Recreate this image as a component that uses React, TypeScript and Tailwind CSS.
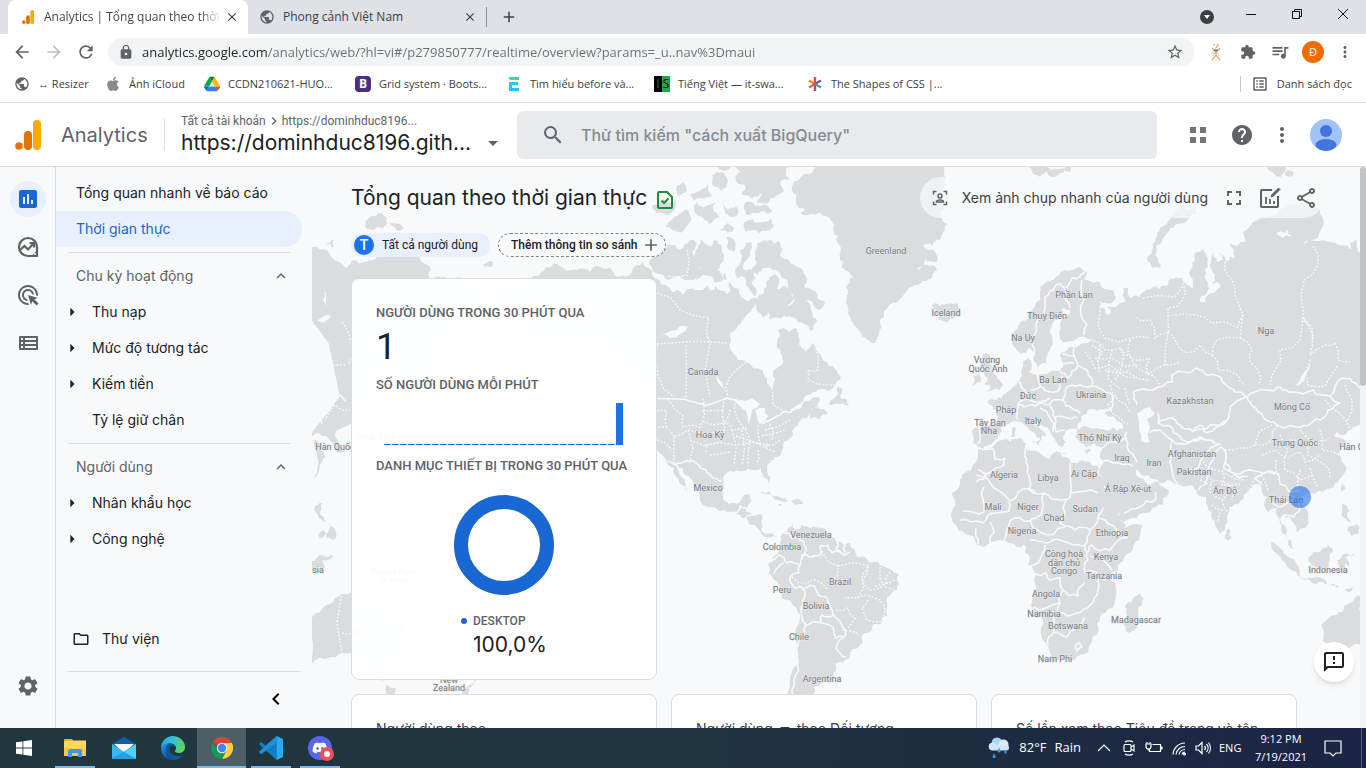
import React from "react";
import {
  MdAdd, MdAdsClick, MdArrowBack, MdArrowDropDown, MdArrowForward, MdArrowRight, MdClose, MdExpandLess,
  MdExtension, MdFullscreen, MdHelp, MdInsertChart, MdKeyboardArrowLeft, MdKeyboardArrowRight, MdListAlt, MdLock,
  MdMoreVert, MdOutlineFeedback, MdOutlineFolder, MdOutlineShare, MdPublic, MdQueueMusic, MdRefresh,
  MdSearch, MdSettings, MdStarBorder,
} from "react-icons/md";
import { FaApple, FaDiscord } from "react-icons/fa";

/* ---------- map geometry ---------- */

type Pt = [number, number];

const parse = (s: string): Pt[] =>
  s.trim().split(/\s+/).map((p) => p.split(",").map(Number) as Pt);

const noise = (a: number, b: number) => {
  const v = Math.sin(a * 12.9898 + b * 78.233) * 43758.5453;
  return v - Math.floor(v) - 0.5;
};

/* Adds small midpoint offsets so that a coarse outline reads as a coast. */
const roughen = (pts: Pt[], closed: boolean, amount: number, depth: number): Pt[] => {
  if (depth === 0) return pts;
  const out: Pt[] = [];
  pts.forEach((p, i) => {
    out.push(p);
    if (i === pts.length - 1 && !closed) return;
    const q = pts[(i + 1) % pts.length];
    const dx = q[0] - p[0];
    const dy = q[1] - p[1];
    const len = Math.hypot(dx, dy);
    if (len < 3) return;
    const k = noise(p[0] + q[0], p[1] + q[1]) * amount;
    out.push([(p[0] + q[0]) / 2 - dy * k, (p[1] + q[1]) / 2 + dx * k]);
  });
  return roughen(out, closed, amount, depth - 1);
};

const toPath = (s: string, closed: boolean, amount: number, depth: number) =>
  "M" + roughen(parse(s), closed, amount, depth).map((p) => p[0].toFixed(1) + "," + p[1].toFixed(1)).join("L") + (closed ? "Z" : "");

const land: string[] = [
  // Greenland, Iceland
  "815,160 812,173 800,178 793,184 792,190 797,196 796,203 805,209 800,213 811,214 818,213 826,216 832,221 833,229 838,236 841,248 840,260 842,268 849,272 853,276 850,282 846,287 848,293 846,302 848,313 851,320 856,327 862,337 870,341 875,343 879,333 880,320 884,311 888,307 896,303 903,296 908,289 915,285 926,281 933,274 937,270 927,265 919,270 917,268 925,259 937,262 936,254 925,248 923,245 933,246 940,240 943,232 948,224 942,218 945,205 941,195 945,185 944,175 947,160",
  "932,305 936,303 940,306 946,304 956,303 960,311 954,318 947,322 938,319 940,315 933,314 937,311",
  // Svalbard, Franz Josef, Novaya Zemlya
  "1030,160 1032,172 1040,177 1046,171 1052,177 1060,173 1070,172 1073,160",
  "1265,160 1268,170 1276,177 1284,173 1283,160",
  "1288,170 1294,172 1292,177 1286,176",
  "1196,206 1183,208 1172,215 1163,226 1157,236 1153,247 1147,260 1153,268 1162,270 1158,260 1157,250 1162,241 1167,233 1175,225 1188,219 1196,214",
  // Eurasia
  "1013,333 1018,326 1028,318 1035,306 1040,292 1044,284 1052,280 1060,274 1065,270 1072,270 1080,267 1087,272 1083,279 1087,280 1100,282 1112,290 1116,297 1113,302 1103,303 1093,298 1100,307 1107,315 1111,313 1108,306 1113,307 1120,303 1125,302 1123,288 1128,288 1130,298 1140,297 1146,290 1153,287 1160,289 1168,285 1170,279 1183,278 1187,285 1193,288 1189,273 1192,263 1195,253 1203,249 1206,255 1205,270 1208,283 1207,293 1200,302 1206,302 1211,293 1220,288 1217,282 1212,284 1215,275 1211,262 1212,250 1217,262 1223,260 1218,253 1226,262 1230,256 1237,270 1235,257 1230,243 1245,242 1243,232 1253,222 1273,215 1287,207 1303,203 1318,208 1323,218 1321,230 1311,240 1303,245 1315,241 1323,240 1335,243 1350,249 1362,253 1362,424 1352,428 1346,434 1337,432 1334,436 1343,439 1348,440 1343,446 1340,449 1345,465 1344,474 1338,482 1327,489 1317,492 1310,493 1306,495 1300,499 1303,506 1308,513 1309,523 1302,528 1297,533 1294,524 1289,517 1283,515 1282,524 1286,534 1291,540 1294,549 1288,545 1282,533 1280,523 1277,508 1268,512 1267,497 1260,484 1252,488 1247,493 1242,500 1235,504 1228,514 1225,529 1220,536 1216,527 1211,516 1208,507 1206,497 1199,496 1196,490 1192,485 1175,484 1160,483 1153,479 1143,476 1136,469 1131,464 1136,474 1145,482 1150,487 1156,481 1160,486 1169,493 1163,505 1150,512 1137,518 1123,522 1118,510 1112,500 1106,488 1099,474 1102,460 1103,447 1095,444 1087,447 1080,443 1076,438 1077,430 1088,427 1100,429 1112,428 1123,429 1121,422 1113,416 1104,414 1107,408 1098,411 1090,409 1082,416 1080,422 1078,429 1066,431 1063,436 1066,442 1062,448 1057,444 1053,437 1049,430 1042,425 1035,419 1031,420 1035,426 1043,431 1046,436 1043,435 1041,441 1036,436 1028,428 1021,422 1010,423 1001,427 1000,434 994,442 987,446 979,447 973,443 974,428 983,426 997,423 997,410 992,406 987,402 995,400 1002,398 1007,392 1012,388 1017,382 1022,376 1023,362 1029,358 1029,372 1040,374 1050,372 1060,371 1062,362 1060,356 1066,351 1077,347 1088,343 1090,339 1080,337 1070,341 1063,342 1059,334 1060,325 1068,315 1070,310 1063,308 1060,316 1053,323 1050,333 1053,343 1048,352 1046,363 1037,370 1033,358 1030,348 1020,354 1014,347",
  // British Isles, Mediterranean islands
  "982,357 986,353 990,355 988,360 992,366 997,376 1003,384 1000,390 987,392 990,385 985,384 988,378 984,374 986,368 980,366",
  "973,376 979,372 981,382 972,386",
  "1012,428 1015,427 1014,437 1011,436",
  "1032,441 1041,440 1039,446",
  "1058,452 1066,453 1060,455",
  "1084,451 1091,449 1087,454",
  // Africa, Madagascar
  "978,449 985,449 995,444 1010,442 1023,440 1026,448 1031,451 1045,457 1050,459 1053,453 1060,452 1066,457 1078,463 1088,461 1097,465 1100,474 1097,469 1104,488 1112,502 1120,520 1125,528 1143,525 1139,540 1130,553 1120,563 1112,572 1115,583 1115,601 1106,612 1100,617 1099,630 1093,636 1091,643 1080,655 1070,661 1053,663 1048,647 1041,634 1039,615 1032,602 1036,588 1036,575 1028,565 1026,553 1024,545 1016,547 1010,543 1000,540 988,544 977,545 965,534 955,524 951,516 953,508 952,493 960,480 966,472 973,465",
  "1140,593 1142,605 1138,618 1133,631 1127,632 1123,622 1126,612 1125,606 1132,602",
  // Asia islands
  "1226,530 1230,529 1232,538 1228,541 1225,536",
  "1345,486 1342,492 1341,487 1343,483",
  "1271,542 1280,548 1290,558 1300,570 1300,577 1291,570 1280,556",
  "1299,577 1312,578 1327,582 1326,585 1312,583",
  "1309,557 1320,552 1328,545 1333,552 1330,560 1326,570 1318,569 1311,565",
  "1337,560 1342,555 1355,554 1346,558 1350,567 1345,563 1343,574 1339,569",
  "1342,504 1347,506 1347,516 1351,521 1344,518",
  "1347,529 1356,524 1359,533 1352,536",
  "1330,585 1339,586 1338,588",
  "1345,590 1356,586 1348,592",
  "1362,596 1350,603 1342,612 1330,617 1321,625 1323,641 1327,655 1340,652 1362,645",
  "1350,242 1357,241 1358,249 1351,248",
  // west edge
  "306,246 313,247 327,250 340,262 347,268 353,260 366,262 377,257 403,257 420,258 430,267 430,278 445,277 460,277 500,285 540,310 520,330 480,330 440,360 420,400 395,380 380,370 370,400 351,424 342,428 335,436 345,452 336,451 328,438 318,433 306,440",
  "313,440 320,444 324,452 322,462 317,475 311,482",
  "316,505 322,503 320,514 326,522 319,519 315,512",
  "330,525 335,530 333,540 326,538",
  "323,530 326,533 318,540",
  "311,561 322,555 334,556 322,560 325,568 318,567 317,574 311,572",
  "306,619 316,613 325,606 334,601 341,594 351,592 358,598 366,600 372,608 382,593 390,612 404,630 410,645 400,665 385,680 372,678 366,665 351,653 338,655 325,659 306,665",
  "386,685 397,686 395,694 390,698 386,694",
  "473,672 479,678 474,684 468,694 463,698 458,697 470,685",
  "366,220 372,216 384,216 387,223 383,228 372,230 365,226",
  "390,223 401,225 404,229 396,230",
  "483,264 493,262 491,267 484,267",
  "326,243 334,240 333,248",
  // North America
  "500,300 525,280 537,276 545,268 553,264 566,271 577,270 590,272 600,267 615,276 630,275 640,265 643,262 652,271 660,281 668,287 673,292 680,291 684,294 690,289 700,290 707,285 712,291 716,286 727,294 729,283 723,278 726,272 731,284 737,288 741,298 748,302 757,298 763,294 767,286 770,277 775,274 779,282 777,289 785,286 790,290 793,298 787,306 782,310 779,318 770,319 768,312 763,318 760,313 755,304 752,309 745,317 738,325 730,337 729,345 733,354 738,360 750,364 753,368 763,370 767,378 768,384 773,388 775,380 773,374 776,369 782,358 779,349 777,342 778,330 785,329 791,331 797,329 799,338 801,347 806,352 813,343 817,350 822,358 829,366 838,374 840,380 833,388 822,389 813,392 804,398 800,404 790,412 800,409 806,401 813,398 820,399 815,407 809,410 813,408 823,409 828,413 820,419 812,419 810,413 800,421 795,427 793,435 785,441 782,450 775,457 768,464 767,471 770,480 768,484 763,476 761,468 748,468 744,471 730,471 723,478 722,490 723,499 729,504 739,503 743,496 750,495 748,505 744,513 752,514 761,514 762,524 764,533 772,533 778,537 774,536 766,537 758,529 749,524 740,515 730,512 719,511 708,507 700,500 699,493 694,486 685,475 677,464 674,463 679,473 685,483 688,491 680,484 675,475 668,465 665,458 657,450 650,430 645,400 625,370 600,350 570,340 540,350 520,330",
  "829,404 833,399 838,386 841,388 840,395 847,400 849,405 843,403 838,404",
  "760,492 770,491 780,497 789,501 781,501 770,494",
  "791,501 801,501 803,504 795,505",
  "778,505 782,504 781,506",
  // Arctic archipelago
  "757,243 764,240 774,244 779,241 785,249 780,254 787,259 795,265 803,270 807,282 804,287 812,290 817,298 824,301 820,310 813,305 806,300 812,312 817,320 812,331 804,324 796,318 790,316 778,318 782,308 792,304 793,295 788,284 783,278 776,270 765,268 758,274 752,270 757,262 755,255",
  "746,242 752,243 750,252 745,262 744,270 750,269 756,278 752,283 757,291 754,296 749,288 742,276 737,279 735,270 741,262 740,250",
  "700,240 709,246 715,240 722,248 724,258 717,270 723,280 714,282 704,275 696,280 700,268 693,258 698,248",
  "668,245 680,250 690,240 697,243 693,255 699,270 693,280 680,276 668,280 656,273 650,260 660,252",
  "744,222 753,219 763,222 771,218 773,228 766,231 752,230 745,231",
  "736,160 741,172 736,181 746,187 742,195 752,199 762,192 757,203 768,203 776,196 784,190 780,183 789,180 786,172 792,160",
  "745,203 755,206 766,205 772,210 768,214 755,213 746,215",
  "722,203 729,209 736,206 738,213 731,217 725,213",
  "720,230 728,223 734,227 732,232 724,230",
  "726,237 735,241 733,252 727,246",
  "697,202 706,206 716,202 714,212 720,217 709,224 700,216 694,209",
  "679,214 688,210 690,222 684,230 672,230 665,226 672,220",
  "652,206 663,199 670,203 676,200 675,209 664,214 655,216",
  "690,195 700,191 708,184 712,195 704,199 695,200",
  "712,175 722,172 728,182 721,191 713,186",
  "676,189 684,182 687,190 679,196",
  "727,160 730,168 722,170 718,164",
  "779,289 786,288 786,296 780,296",
  // South America
  "783,532 788,528 793,524 795,530 801,525 810,528 825,529 832,537 837,542 850,543 857,557 869,562 880,565 890,569 899,575 899,584 892,593 887,603 887,616 881,624 872,627 862,635 860,645 850,657 843,663 834,663 836,671 832,680 822,683 814,687 815,700 788,700 790,685 793,668 797,645 800,615 797,608 786,600 780,591 774,580 768,573 768,564 774,556 780,550 780,542",
];

const seas: string[] = [
  "1137,413 1143,409 1150,407 1155,413 1147,419 1150,428 1150,442 1141,441 1139,430",
  "1302,375 1309,368 1310,362 1306,373 1298,386 1295,386",
  "660,335 671,331 680,326 688,327 680,334 670,338",
  "1276,233 1285,233 1287,229 1288,234 1292,236 1286,235 1284,238",
  "735,402 744,401 752,398 760,404 752,410 748,424 746,411 740,406",
  "755,410 765,408 768,416 760,424 757,418",
  "324,291 326,298 327,306 323,300",
  "317,321 326,315 333,312 329,319",
  "716,376 722,382 725,390 718,383",
];

const borders: string[] = [
  // North America
  "640,398 728,398 738,401 745,402", "762,424 780,415 792,412", "667,461 682,463 697,464 706,470 713,478 722,481",
  "735,513 740,506 746,508", "746,518 752,515 758,514",
  // South America
  "783,532 792,538 803,541 806,548 803,555 801,563", "770,562 779,555 787,563 800,565", "774,574 784,563",
  "801,555 812,557 822,552 820,546 828,545 832,553 842,554 850,552", "837,542 836,550 842,553", "845,544 845,553",
  "801,563 799,573 790,578 795,588 803,588 810,585 817,592 826,597 830,606 833,615 842,626 846,635",
  "802,588 803,605 800,610", "803,605 806,625 813,622 822,623 822,615 833,615", "822,623 834,631 835,638 843,636",
  "806,625 799,640 798,660 794,680 792,700", "846,635 836,648 846,657",
  // Africa
  "982,450 993,449 995,459 1005,458 1003,466 989,473 976,482", "978,470 989,473", "1026,445 1025,452 1028,466 1029,490 1034,494",
  "976,475 1010,501 1030,489 1044,493", "984,487 984,512 963,511", "1044,493 1062,500 1070,497 1070,463", "1070,493 1098,493",
  "1010,501 1009,511 996,513 983,523 960,520", "1044,493 1041,515 1030,521 1010,521", "1066,500 1065,516 1060,523 1075,530 1090,530 1098,518 1104,508",
  "1030,521 1040,532 1065,527", "1010,521 1004,540", "990,522 990,543", "976,528 978,544", "1030,540 1046,543 1060,540 1075,545 1085,545 1090,530",
  "1098,518 1112,525 1118,534 1127,538 1110,550 1092,545 1088,552", "1045,545 1040,560 1030,566", "1085,545 1088,560 1085,572 1104,580 1115,578",
  "1090,556 1112,570", "1035,574 1046,573 1050,580 1060,578 1063,590 1078,596 1085,582", "1063,590 1060,603 1033,607",
  "1060,603 1058,613 1077,613 1090,605 1097,595 1098,578", "1054,612 1054,630 1048,645", "1054,632 1066,637 1077,627 1084,617", "1075,647 1079,643 1082,647 1077,651 1075,647",
  // Europe
  "1034,355 1035,334 1038,320 1045,305 1050,291 1060,284 1065,290", "1066,288 1072,278 1080,277 1085,270", "1066,290 1070,308",
  "1082,280 1084,300 1087,325 1083,335", "1018,381 1025,390 1024,400 1018,405", "1038,374 1040,386 1046,391 1060,388 1062,376", "1040,386 1031,390",
  "1060,372 1068,378 1078,366 1074,348", "1058,362 1074,363", "1062,354 1074,356", "1065,390 1080,385 1095,386 1110,393 1113,405 1100,413",
  "1065,390 1062,400 1072,408 1080,414", "1018,405 1024,407 1035,406 1050,404 1062,400", "1018,405 1018,420", "1025,398 1040,402 1050,398", "1040,408 1050,418 1053,432",
  "1050,405 1055,418 1065,417 1078,418", "1055,418 1056,432 1065,430", "998,424 1008,426", "979,428 978,444",
  "1078,366 1088,372 1092,385",
  // Asia
  "1133,392 1153,390 1173,382 1172,375 1185,372 1197,368 1205,374 1215,375 1225,384 1235,392 1247,397 1230,407 1227,420 1210,425 1196,430 1182,428 1172,418 1158,423 1158,413",
  "1133,392 1137,405", "1247,397 1267,390 1280,387 1293,392 1313,390 1330,396 1340,403 1328,410 1320,420 1310,424 1297,427 1273,422 1262,414 1250,402 1247,397",
  "1330,396 1342,378 1350,378 1362,388", "1158,423 1170,426 1180,436 1190,442 1200,437 1215,442", "1192,432 1200,425 1205,432 1215,428 1225,421", "1150,433 1160,430 1172,440",
  "1172,440 1170,462 1178,484", "1172,440 1190,442 1202,437 1220,444 1205,455 1198,468 1180,472", "1198,490 1208,476 1213,460 1221,447 1225,463 1240,474 1260,472 1275,474",
  "1225,463 1224,469 1240,478 1248,476", "1127,432 1127,447 1137,462", "1103,448 1114,442 1127,438", "1102,462 1113,463 1133,466", "1124,513 1140,507 1155,500 1156,492",
  "1262,485 1255,478 1264,473 1278,474 1280,484 1290,492 1300,490", "1270,500 1283,506 1296,500", "1283,515 1294,517 1300,510 1288,495",
  // west edge
  "312,385 318,379 326,378 334,392 346,402", "312,408 322,412 322,424",
];

const dotted: string[] = [
  "687,250 687,275 668,276", "657,293 680,310 709,318 710,344 710,397", "657,344 729,343", "686,345 686,397", "657,345 658,376 674,397",
  "746,362 729,378 728,397", "772,388 773,405 785,412", "815,345 818,370 808,370 808,380 817,384 838,385",
  "657,411 667,411 666,427 657,427", "668,399 683,416 683,427 700,427 703,399", "703,411 724,411", "666,427 674,437 688,430 725,430 724,400",
  "688,430 689,465", "674,437 674,463", "657,440 672,450", "706,452 706,445 735,445 770,445", "703,422 726,422 732,430 748,428", "730,410 726,421",
  "735,400 738,420 750,440", "732,430 734,465", "742,430 742,466", "750,440 748,466", "758,425 760,445", "762,436 785,430", "765,446 780,440", "710,455 730,452", "690,440 720,442", "770,424 772,440", "758,450 757,464", "736,436 775,452", "765,430 790,420",
  "820,553 828,562 838,566 838,575 832,580", "838,566 868,565 862,575 858,598 845,598", "792,577 806,584 815,580 828,590", "868,566 862,580 870,590 880,588 895,580", "880,567 880,580 895,590", "875,586 892,582", "858,598 870,596 880,600 885,610 880,622 867,620 862,608 868,600", "836,610 848,608 855,618 848,628", "842,630 860,634", "890,572 886,585",
  "1183,283 1183,300 1168,308 1169,333 1155,338 1150,320 1135,317", "1143,298 1175,297 1183,285", "1168,316 1195,315 1212,323 1238,328 1243,315 1235,295 1232,280 1225,270 1228,258",
  "1243,315 1240,338 1217,340 1212,355 1200,345 1185,353 1175,340 1168,333 1165,365", "1240,338 1252,350 1250,362 1260,375 1258,385", "1212,355 1218,370 1238,375 1245,385",
  "1313,246 1318,265 1304,280 1303,310 1300,340 1280,350 1275,370 1270,385", "1304,318 1313,335 1310,355 1325,345 1335,343 1338,360 1350,362", "1304,320 1312,328 1312,342", "1310,360 1308,385 1325,386 1338,365",
  "1100,307 1098,325 1105,338 1132,338 1150,338", "1090,340 1105,350 1120,348 1135,360 1150,358", "1085,352 1095,368 1110,365 1122,375 1135,378", "1100,345 1098,360", "1112,350 1108,378 1120,388", "1120,348 1122,365 1115,380", "1130,340 1132,360 1145,372 1160,385", "1150,358 1148,375 1165,365 1180,362", "1110,385 1118,400 1130,412", "1125,388 1130,405", "1095,358 1112,358 1140,365", "1105,370 1128,372 1150,380", "1092,345 1102,352 1100,372",
  "1115,395 1108,405 1120,418 1130,425", "1225,450 1240,448 1255,445 1258,435 1262,430 1272,425", "1255,445 1272,440 1278,425", "1262,455 1275,450 1288,458 1300,452 1305,462 1320,455", "1280,435 1288,450 1285,470 1300,480 1315,475", "1300,430 1310,440 1308,455 1325,465 1330,478", "1290,440 1312,445 1328,440", "1320,430 1322,450 1340,455", "1300,470 1298,488", "1276,460 1280,480", "1325,400 1338,412 1350,430", "1345,385 1352,400 1348,420", "1310,468 1318,488",
  "1200,455 1215,470 1228,475 1245,480", "1200,468 1212,480 1210,492 1222,500 1240,490", "1213,480 1230,485 1232,500", "1212,505 1222,510 1218,522", "1222,500 1228,512", "1222,470 1222,485 1240,484", "1200,480 1212,485", "1262,475 1268,490", "1255,478 1248,492",
  "312,345 317,355 324,365 345,365", "324,365 322,385 330,410 325,420", "342,322 352,346 348,365", "342,592 342,653", "342,633 352,633", "322,415 335,405 350,410",
];

const labels: [string, number, number][] = [
  ["Greenland", 886, 254], ["Iceland", 946, 316], ["Canada", 703, 375], ["Hoa Kỳ", 710, 438], ["Mexico", 708, 491],
  ["Venezuela", 811, 538], ["Colombia", 782, 550], ["Brazil", 840, 585], ["Peru", 782, 593], ["Bolivia", 816, 609],
  ["Chile", 799, 640], ["Argentina", 822, 682], ["Phần Lan", 1074, 298], ["Thụy Điển", 1047, 319], ["Na Uy", 1023, 341],
  ["Vương", 987, 363], ["Quốc Anh", 988, 372], ["Ba Lan", 1053, 383], ["Đức", 1028, 399], ["Ukraina", 1091, 398],
  ["Pháp", 1006, 413], ["Italy", 1033, 424], ["Tây Ban", 990, 426], ["Nha", 989, 434], ["Thổ Nhĩ Kỳ", 1100, 441],
  ["Nga", 1266, 334], ["Kazakhstan", 1190, 404], ["Mông Cổ", 1292, 410], ["Trung Quốc", 1295, 446], ["Hàn Quốc", 1359, 450],
  ["Afghanistan", 1192, 457], ["Pakistan", 1194, 475], ["Iraq", 1122, 461], ["Iran", 1154, 466], ["Ấn Độ", 1225, 494],
  ["Ả Rập Xê-út", 1128, 492], ["Algeria", 1004, 478], ["Libya", 1048, 481], ["Ai Cập", 1084, 477], ["Mali", 993, 510],
  ["Niger", 1028, 510], ["Chad", 1054, 521], ["Sudan", 1085, 512], ["Nigeria", 1022, 534], ["Ethiopia", 1112, 536],
  ["Cộng hoà", 1064, 557], ["dân chủ", 1064, 566], ["Congo", 1064, 574], ["Kenya", 1106, 560], ["Tanzania", 1104, 579],
  ["Angola", 1046, 597], ["Namibia", 1044, 617], ["Botswana", 1068, 629], ["Madagascar", 1136, 623], ["Nam Phi", 1055, 662],
  ["Thái Lan", 1286, 503], ["Indonesia", 1328, 573], ["Hàn Quốc", 335, 450], ["sia", 318, 573], ["Nhật Bản", 375, 440],
  ["Papua New", 394, 575], ["Guinea", 394, 583], ["Úc", 357, 635], ["New", 449, 683], ["Zealand", 449, 691],
];

const landPath = land.map((s) => toPath(s, true, 0.5, 2)).join("");
const seaPath = seas.map((s) => toPath(s, true, 0.4, 1)).join("");
const borderPath = borders.map((s) => toPath(s, false, 0.4, 2)).join("");
const dottedPath = dotted.map((s) => toPath(s, false, 0.35, 1)).join("");

function WorldMap() {
  return (
    <svg
      className="absolute inset-x-0 top-0 h-[527px] w-full"
      viewBox="312 167 1048 527"
      preserveAspectRatio="xMidYMin slice"
      role="img"
      aria-label="Bản đồ người dùng"
    >
      <path d={landPath} fill="#dadce0" />
      <path d={dottedPath} fill="none" stroke="#f8f9fb" strokeWidth="1.5" strokeDasharray="1.8 1.8" />
      <path d={borderPath} fill="none" stroke="#f8f9fb" strokeWidth="1.6" strokeLinejoin="round" />
      <path d={seaPath} fill="#f8f9fb" />
      <g
        className="font-['Roboto',sans-serif] text-[9px]"
        fill="#757b80"
        stroke="#e6e8ea"
        strokeWidth="1"
        paintOrder="stroke"
        textAnchor="middle"
      >
        {labels.map(([name, x, y]) => (
          <text key={name + x} x={x} y={y}>{name}</text>
        ))}
      </g>
      <circle cx="1300" cy="497" r="11" fill="#1a73e8" fillOpacity="0.6" />
    </svg>
  );
}

/* ---------- drawings ---------- */

const AnalyticsLogo = ({ className }: { className: string }) => (
  <svg className={className} viewBox="0 0 26 30" aria-hidden="true">
    <rect x="18" y="0" width="8" height="30" rx="4" fill="#f9ab00" />
    <rect x="9" y="11" width="8" height="19" rx="4" fill="#e37400" />
    <circle cx="4" cy="26" r="3.8" fill="#e37400" />
  </svg>
);

const DriveLogo = () => (
  <svg className="size-4" viewBox="0 0 87 78" aria-hidden="true">
    <path d="M6.600 66.850l3.850 6.650c.8 1.400 1.950 2.500 3.300 3.300l13.750-23.800H0c0 1.550.4 3.100 1.200 4.500z" fill="#0066da" />
    <path d="M43.650 25L29.900 1.200c-1.350.8-2.500 1.900-3.300 3.300l-25.400 44A9 9 0 000 53h27.500z" fill="#00ac47" />
    <path d="M73.550 76.800c1.350-.8 2.500-1.900 3.300-3.300l1.600-2.750L86.100 57.500c.8-1.400 1.200-2.950 1.200-4.500H59.800l5.850 11.500z" fill="#ea4335" />
    <path d="M43.650 25L57.400 1.200C56.050.4 54.500 0 52.900 0H34.400c-1.600 0-3.150.45-4.500 1.200z" fill="#00832d" />
    <path d="M59.800 53H27.500L13.750 76.800c1.350.8 2.900 1.200 4.500 1.200h50.800c1.600 0 3.150-.45 4.500-1.200z" fill="#2684fc" />
    <path d="M73.400 26.500L60.700 4.500c-.8-1.400-1.950-2.500-3.300-3.300L43.650 25 59.800 53h27.450c0-1.550-.4-3.100-1.200-4.500z" fill="#ffba00" />
  </svg>
);

const BlueE = () => (
  <svg className="size-4" viewBox="0 0 16 16" aria-hidden="true">
    <path d="M3 1h10v3H5a2 2 0 01-2-2z" fill="#1fe0b5" />
    <path d="M3 6h9v3H6v3h7v3H3z" fill="#22c7ea" />
    <path d="M3 6h9v3H3z" fill="#1fd3d8" />
  </svg>
);

const Asterisk = () => (
  <svg className="size-4" viewBox="0 0 16 16" fill="none" strokeWidth="2.400" aria-hidden="true">
    <path d="M8 8V1" stroke="#e5484d" />
    <path d="M8 8v7" stroke="#8a4fa0" />
    <path d="M8 8L2 4.500" stroke="#f5821f" />
    <path d="M8 8l6-3.500" stroke="#7b5a78" />
    <path d="M8 8l-6 3.500" stroke="#f0642c" />
    <path d="M8 8l6 3.500" stroke="#3aa6b9" />
    <circle cx="8" cy="8" r="1.500" fill="#e5484d" />
  </svg>
);

const Stickman = () => (
  <svg className="size-4" viewBox="0 0 16 16" fill="none" aria-hidden="true">
    <path d="M8 4l-4 5h4l4-4M8 6l3 6M8 6L5 12" stroke="#c9d0dc" strokeWidth="1" />
    <path d="M6 1.500a2 2 0 114 0c0 1-2 1-2 2.500M4 4l2 2h4l2-2M8 6v5M8 11l-4 5M8 11l4 5" stroke="#f09a4a" strokeWidth="1.200" />
    <path d="M6 6.500h4" stroke="#3d6fb5" strokeWidth="1.400" />
  </svg>
);

const ExploreIcon = () => (
  <svg className="size-6" viewBox="0 0 24 24" fill="none" stroke="#5f6368" strokeWidth="2.200" aria-hidden="true">
    <path d="M12 3a9 9 0 100 18h9v-9a9 9 0 00-9-9z" strokeLinejoin="round" />
    <path d="M4 15l4.500-4 3.500 3.500 5-5.500" />
    <path d="M13.500 8H18v4.500" />
    <path d="M15.500 21l5.500-5.500V21z" fill="#5f6368" stroke="none" />
    <circle cx="19" cy="19" r="1" fill="#f8f9fb" stroke="none" />
  </svg>
);

const TableIcon = () => (
  <svg className="size-5" viewBox="0 0 20 20" aria-hidden="true">
    <rect x="1" y="3" width="19" height="14" rx="1" fill="#5f6368" />
    <path d="M3 5h2v2H3zM7 5h11v2H7zM3 9h2v2H3zM7 9h11v2H7zM3 13h2v2H3zM7 13h11v2H7z" fill="#f8f9fb" />
  </svg>
);

const VerifiedDoc = () => (
  <svg className="mt-1 h-5 w-4" viewBox="0 0 16 20" fill="none" stroke="#1e8e3e" strokeWidth="2" aria-hidden="true">
    <path d="M1 3a1 1 0 011-1h8l5 5v10a1 1 0 01-1 1H2a1 1 0 01-1-1z" />
    <path d="M4.500 10.500l2.500 2.500 4.500-4.500" />
  </svg>
);

const SnapshotIcon = () => (
  <svg className="size-4" viewBox="0 0 16 16" fill="none" stroke="#5f6368" strokeWidth="1.500" aria-hidden="true">
    <path d="M1.500 4.500v-3h3M11.500 1.500h3v3M14.500 11.500v3h-3M4.500 14.500h-3v-3" />
    <circle cx="8" cy="6" r="2" />
    <path d="M4.500 12c0-2.700 7-2.700 7 0z" />
  </svg>
);

const EditChartIcon = () => (
  <svg className="size-6" viewBox="0 0 24 24" fill="none" stroke="#5f6368" strokeWidth="2" aria-hidden="true">
    <path d="M14 4H4a1 1 0 00-1 1v15a1 1 0 001 1h15a1 1 0 001-1V10" />
    <path d="M8 11v7M12 13v5M16 15v3" strokeWidth="1.800" />
    <path d="M13 11l1-2.500L20.500 2 22 3.500 15.500 10z" fill="#5f6368" strokeWidth="1" />
  </svg>
);

const Avatar = () => (
  <svg className="size-8" viewBox="0 0 32 32" aria-hidden="true">
    <clipPath id="avatar-clip"><circle cx="16" cy="16" r="16" /></clipPath>
    <g clipPath="url(#avatar-clip)">
      <rect width="32" height="32" fill="#a1c2fa" />
      <circle cx="16" cy="12" r="6" fill="#4374e0" />
      <ellipse cx="16" cy="26" rx="10.500" ry="6" fill="#4374e0" />
    </g>
  </svg>
);

const WindowsLogo = () => (
  <svg className="size-4" viewBox="0 0 16 16" fill="#fff" aria-hidden="true">
    <path d="M0 2.300L6.500 1.400v6.200H0zM7.300 1.300L16 0v7.600H7.300zM0 8.400h6.500v6.200L0 13.700zM7.300 8.400H16V16l-8.700-1.300z" />
  </svg>
);

const ExplorerIcon = () => (
  <svg className="size-6" viewBox="0 0 24 24" aria-hidden="true">
    <path d="M1 3h8l2 3H1z" fill="#e0a213" />
    <path d="M1 6l1-1.500h21V20H1z" fill="#ffd75e" />
    <path d="M1 12h22v8H1z" fill="#fccb43" />
    <path d="M5 21v-6a2 2 0 012-2h10a2 2 0 012 2v6h-4v-4H9v4z" fill="#3b9be8" />
  </svg>
);

const MailIcon = () => (
  <svg className="size-6" viewBox="0 0 24 24" aria-hidden="true">
    <path d="M0 8l12-7 12 7v15H0z" fill="#0f5fae" />
    <path d="M2 8h20l-10 9z" fill="#fff" />
    <path d="M0 8l12 8L0 23z" fill="#35b8f1" />
    <path d="M24 8L0 23h24z" fill="#1fa0e6" />
    <path d="M24 8L12 16l12 7z" fill="#50d0fa" />
  </svg>
);

const EdgeIcon = () => (
  <svg className="size-6" viewBox="0 0 24 24" aria-hidden="true">
    <defs>
      <linearGradient id="edge-top" x1="0" x2="1" y1="0.300" y2="0.500">
        <stop offset="0" stopColor="#2fa8e6" /><stop offset="0.500" stopColor="#35c1d6" /><stop offset="1" stopColor="#62d84a" />
      </linearGradient>
      <linearGradient id="edge-mid" x1="0" x2="0.600" y1="0" y2="1">
        <stop offset="0" stopColor="#1b9de2" /><stop offset="1" stopColor="#114a8b" />
      </linearGradient>
    </defs>
    <path d="M0 12C0 5 5.500 0 12 0s12 5 12 11c0 4-3 6-6 6-2.500 0-4-1-4-2 0-.8 1-1.200 1-3 0-2.500-2.500-4.500-6-4.500C4 7.500 1 10 0 12z" fill="url(#edge-top)" />
    <path d="M0 12c1-3.500 4.500-5 8-4.500C6 9 5 11.500 5 14c0 5 3 9 8 10C6 24.500 0 19.500 0 12z" fill="url(#edge-mid)" />
    <path d="M8.500 12.500C8.500 18 13 20 17 20c2 0 4-.7 5.300-1.500C20 22 16.500 24 13 24c-5-1-8-5-8-10 0-2.500 1-5 3-6.500 3 0 5.500 1 6.500 3-3-1-6 0-6 2z" fill="#125699" />
  </svg>
);

const ChromeIcon = () => (
  <svg className="size-6" viewBox="0 0 24 24" aria-hidden="true">
    <path d="M12 12L2.500 6.500A11 11 0 0121.500 6.500z" fill="#db4437" />
    <path d="M12 12L21.500 6.500A11 11 0 0112 23l4.500-8.500z" fill="#ffcd40" />
    <path d="M12 12l4.300 2.500L12 23A11 11 0 012.500 6.500l5.200 8z" fill="#0f9d58" />
    <path d="M12 7h9.800A11 11 0 0121.500 17L12 12z" fill="#ffcd40" />
    <path d="M2.500 6.500A11 11 0 0121.800 7H12z" fill="#db4437" />
    <circle cx="12" cy="12" r="5.200" fill="#f1f1f1" />
    <circle cx="12" cy="12" r="4.200" fill="#4285f4" />
  </svg>
);

const VsCodeIcon = () => (
  <svg className="size-6" viewBox="0 0 24 24" aria-hidden="true">
    <path d="M17.500 0L7 9.700 2.500 6.200.5 7.200v1.600L17.500 24v-6.800z" fill="#0f7cc4" />
    <path d="M17.500 6.800L2.500 18 .5 16.900v-1.600L17.500 0z" fill="#1a8fdb" />
    <path d="M17.500 0L24 3v18l-6.500 3z" fill="#2ba9f3" />
  </svg>
);

const DiscordIcon = () => (
  <span className="relative flex size-6 items-center justify-center rounded-full bg-[#5865f2] text-white">
    <FaDiscord className="size-4" />
    <svg className="absolute -right-0.5 -bottom-px size-3.5" viewBox="0 0 14 14" aria-hidden="true">
      <circle cx="7" cy="7" r="7" fill="#f04f54" /><circle cx="7" cy="7" r="3" fill="#fff" />
    </svg>
  </span>
);

const WeatherIcon = () => (
  <svg className="size-6" viewBox="0 0 24 24" aria-hidden="true">
    <circle cx="10" cy="7" r="5.500" fill="#a9d8f7" />
    <circle cx="5.500" cy="10.500" r="3.800" fill="#d6ecfa" />
    <circle cx="16.500" cy="8.500" r="5" fill="#d9ecf8" />
    <rect x="3" y="9" width="19" height="5.500" rx="2.700" fill="#cfe6f7" />
    <path d="M12 11.500l1.700 3.500a1.600 1.600 0 11-3.200 0zM17.500 14.500h2v3h-2zM7 17.500l1.700 3a1.600 1.600 0 11-3.200 0z" fill="#3b9be8" />
  </svg>
);

/* ---------- browser chrome ---------- */

const iconButton = "flex shrink-0 items-center justify-center";

function TabStrip() {
  return (
    <div className="flex h-[34px] bg-[#dee1e6] pl-2">
      <div className="flex w-60 items-center rounded-t-lg bg-white pr-2 pl-[13px]">
        <AnalyticsLogo className="h-3.5 w-3.5" />
        <button className="ml-[9px] flex-1 overflow-hidden bg-[linear-gradient(90deg,#3c4043_155px,transparent_178px)] bg-clip-text text-left text-xs whitespace-nowrap text-transparent">
          Analytics | Tổng quan theo thời gian thực
        </button>
        <button className={iconButton + " ml-1 size-4"} aria-label="Đóng thẻ Analytics"><MdClose className="size-3.5 text-[#3c4043]" /></button>
      </div>
      <div className="flex w-[238px] items-center pr-2 pl-[11px]">
        <MdPublic className="size-4 text-[#5f6368]" />
        <button className="ml-2 flex-1 text-left text-xs whitespace-nowrap text-[#3c4043]">Phong cảnh Việt Nam</button>
        <button className={iconButton + " size-4"} aria-label="Đóng thẻ Phong cảnh"><MdClose className="size-3.5 text-[#3c4043]" /></button>
      </div>
      <div className="my-[7px] w-px bg-[#8c9094]" />
      <button className={iconButton + " ml-[13px] w-[18px]"} aria-label="Thẻ mới"><MdAdd className="size-[18px] text-[#3c4043]" /></button>
      <div className="flex-1" />
      <button className={iconButton + " w-[42px]"} aria-label="Tìm thẻ">
        <svg className="size-3.5" viewBox="0 0 14 14"><circle cx="7" cy="7" r="7" fill="#3c4043" /><path d="M4 5h6l-3 4z" fill="#fff" /></svg>
      </button>
      <button className={iconButton + " h-7 w-[46px]"} aria-label="Thu nhỏ"><svg className="size-2.5" viewBox="0 0 10 10"><path d="M0 5.500h10" stroke="#111" /></svg></button>
      <button className={iconButton + " h-7 w-[46px]"} aria-label="Khôi phục">
        <svg className="size-2.5" viewBox="0 0 10 10" fill="none" stroke="#111"><path d="M.5 2.500h7v7h-7zM2.500 2.500v-2h7v7h-2" /></svg>
      </button>
      <button className={iconButton + " h-7 w-[46px]"} aria-label="Đóng"><svg className="size-2.5" viewBox="0 0 10 10"><path d="M0 0l10 10M10 0L0 10" stroke="#111" /></svg></button>
    </div>
  );
}

function Toolbar() {
  return (
    <div className="flex h-9 items-center px-3 text-[#5f6368]">
      <button className={iconButton + " w-5"} aria-label="Quay lại"><MdArrowBack className="size-5" /></button>
      <button className={iconButton + " ml-3 w-5 text-[#bcbec1]"} aria-label="Tiến"><MdArrowForward className="size-5" /></button>
      <button className={iconButton + " ml-3 w-5"} aria-label="Tải lại"><MdRefresh className="size-5" /></button>
      <div className="ml-3 flex h-7 flex-1 items-center rounded-full bg-[#f1f3f4] pr-2.5 pl-2.5">
        <label htmlFor="address"><MdLock className="size-4" title="Địa chỉ" /></label>
        <input
          id="address"
          className="ml-2 h-7 flex-1 bg-[linear-gradient(90deg,#202124_126px,#6a6e73_126px)] bg-clip-text text-[13px] text-transparent outline-none"
          defaultValue="analytics.google.com/analytics/web/?hl=vi#/p279850777/realtime/overview?params=_u..nav%3Dmaui"
        />
        <button className={iconButton} aria-label="Đánh dấu trang"><MdStarBorder className="size-[18px]" /></button>
      </div>
      <button className={iconButton + " ml-3.5 w-4"} aria-label="Tiện ích Stickman"><Stickman /></button>
      <button className={iconButton + " ml-4 w-4"} aria-label="Tiện ích"><MdExtension className="size-4" /></button>
      <button className={iconButton + " ml-3.5 w-5"} aria-label="Điều khiển nội dung"><MdQueueMusic className="size-5" /></button>
      <button className="ml-3 flex size-[22px] shrink-0 items-center justify-center rounded-full bg-[#ef6c00] text-[11px] text-white">Đ</button>
      <button className={iconButton + " ml-3 w-[18px]"} aria-label="Tuỳ chỉnh"><MdMoreVert className="size-[18px]" /></button>
    </div>
  );
}

const bookmarkClass = "flex shrink-0 items-center gap-2 whitespace-nowrap";

function Bookmarks() {
  return (
    <nav className="flex h-[33px] items-center border-b border-[#dadce0] pr-3.5 pb-1 pl-3.5 text-[11px] text-[#3c4043]" aria-label="Dấu trang">
      <a href="#resizer" className={bookmarkClass + " w-[91px]"}><MdPublic className="size-4 text-[#5f6368]" />↔ Resizer</a>
      <a href="#icloud" className={bookmarkClass + " w-[99px]"}><FaApple className="size-4 text-[#8a8a8a]" />Ảnh iCloud</a>
      <a href="#drive" className={bookmarkClass + " w-[151px]"}><DriveLogo />CCDN210621-HUO...</a>
      <a href="#bootstrap" className={bookmarkClass + " w-[151px]"}>
        <span className="flex size-4 items-center justify-center rounded-sm bg-[#4b2e83] text-xs leading-4 font-bold text-white">B</span>Grid system · Boots...
      </a>
      <a href="#before" className={bookmarkClass + " w-[148px]"}><BlueE />Tìm hiểu before và...</a>
      <a href="#itswarm" className={bookmarkClass + " w-[153px]"}>
        <span className="flex size-4 items-center bg-[linear-gradient(90deg,#000_50%,#22a647_50%)] text-xs leading-4">
          <span className="w-2 text-center text-[#1e7a3a]">I</span>
          <span className="w-2 text-center text-black">S</span>
        </span>
        Tiếng Việt — it-swa...
      </a>
      <a href="#shapes" className={bookmarkClass}><Asterisk />The Shapes of CSS |...</a>
      <div className="flex-1" />
      <div className="h-4 w-px bg-[#c4c7cb]" />
      <button className="ml-2.5 flex items-center gap-2"><MdListAlt className="size-[18px] text-[#5f6368]" />Danh sách đọc</button>
    </nav>
  );
}

/* ---------- application ---------- */

const brandFont = "font-['Inter',sans-serif]";

function AppHeader() {
  return (
    <header className="flex h-16 items-center border-b border-[#dadce0] bg-white pr-6 pl-[15px] text-[#5f6368]">
      <AnalyticsLogo className="h-[30px] w-[26px] shrink-0" />
      <span className={brandFont + " ml-5 w-[87px] shrink-0 text-xl whitespace-nowrap"}>Analytics</span>
      <div className="ml-4 h-8 w-px shrink-0 bg-[#dadce0]" />
      <button className="ml-4 flex w-[336px] shrink-0 items-end text-left">
        <span className="w-[300px]">
          <span className="flex items-center font-['Roboto',sans-serif] text-xs leading-4 whitespace-nowrap">
            Tất cả tài khoản<MdKeyboardArrowRight className="size-4" />https://dominhduc8196...
          </span>
          <span className={brandFont + " block text-[21px] leading-7 whitespace-nowrap text-[#202124]"}>https://dominhduc8196.gith...</span>
        </span>
        <MdArrowDropDown className="mb-0.5 size-6" />
      </button>
      <form className="flex h-12 w-full max-w-[640px] items-center rounded-md bg-[#e8eaed] pl-6">
        <label htmlFor="search"><MdSearch className="size-6 shrink-0" title="Tìm kiếm" /></label>
        <input id="search" className={brandFont + " ml-4 h-12 w-full bg-transparent text-base font-medium outline-none placeholder:text-[#868b90]"} placeholder={'Thử tìm kiếm "cách xuất BigQuery"'} />
      </form>
      <div className="ml-auto flex items-center gap-4 pl-7">
        <button className={iconButton + " size-6"} aria-label="Ứng dụng">
          <svg className="size-4" viewBox="0 0 16 16" fill="#757575"><path d="M0 0h6v6H0zM10 0h6v6h-6zM0 10h6v6H0zM10 10h6v6h-6z" /></svg>
        </button>
        <button className={iconButton + " ml-1 size-6"} aria-label="Trợ giúp"><MdHelp className="size-6" /></button>
        <button className={iconButton + " size-6"} aria-label="Tuỳ chọn khác"><MdMoreVert className="size-6" /></button>
        <button className={iconButton} aria-label="Tài khoản"><Avatar /></button>
      </div>
    </header>
  );
}

function Rail() {
  return (
    <nav className="flex w-14 shrink-0 flex-col items-center gap-3 border-r border-[#dadce0] pt-3.5 pb-6 text-[#5f6368]" aria-label="Chính">
      <button className={iconButton + " size-9 rounded-full bg-[#e8f0fe]"} aria-label="Báo cáo"><MdInsertChart className="size-6 text-[#1967d2]" /></button>
      <button className={iconButton + " size-9"} aria-label="Khám phá"><ExploreIcon /></button>
      <button className={iconButton + " size-9"} aria-label="Quảng cáo"><MdAdsClick className="size-6" /></button>
      <button className={iconButton + " size-9"} aria-label="Định cấu hình"><TableIcon /></button>
      <button className={iconButton + " mt-auto size-9"} aria-label="Quản trị"><MdSettings className="size-6" /></button>
    </nav>
  );
}

const navLink = "flex h-9 items-center pb-px pl-5";

const NavGroup = ({ title }: { title: string }) => (
  <button className="flex h-9 w-full items-center justify-between pr-[22px] pb-px pl-5 text-[#5f6368]">
    {title}<MdExpandLess className="size-[18px]" />
  </button>
);

const NavItem = ({ title, leaf }: { title: string; leaf?: boolean }) => (
  <a href="#report" className="flex h-9 items-center pb-px pl-1.5">
    <span className="w-[30px]">{!leaf && <MdArrowRight className="size-5" />}</span>{title}
  </a>
);

function SideNav() {
  return (
    <nav className={brandFont + " flex w-64 shrink-0 flex-col pt-2 pb-2 text-sm text-[#202124]"} aria-label="Báo cáo">
      <a href="#overview" className={navLink}>Tổng quan nhanh về báo cáo</a>
      <a href="#realtime" className={navLink + " mr-2.5 rounded-r-full bg-[#e8f0fe] text-[#1967d2]"}>Thời gian thực</a>
      <hr className="my-[5px] mr-[22px] ml-3 border-[#dadce0]" />
      <NavGroup title="Chu kỳ hoạt động" />
      <NavItem title="Thu nạp" />
      <NavItem title="Mức độ tương tác" />
      <NavItem title="Kiếm tiền" />
      <NavItem title="Tỷ lệ giữ chân" leaf />
      <hr className="my-[5px] mr-[22px] ml-3 border-[#dadce0]" />
      <NavGroup title="Người dùng" />
      <NavItem title="Nhân khẩu học" />
      <NavItem title="Công nghệ" />
      <a href="#library" className="mt-auto flex h-9 items-center gap-3 pb-px pl-4"><MdOutlineFolder className="size-[18px]" />Thư viện</a>
      <hr className="mt-3.5 mr-3 ml-3 border-[#dadce0]" />
      <button className={iconButton + " mt-2 mr-6 h-10 w-6 self-end pb-0.5 text-black"} aria-label="Thu gọn"><MdKeyboardArrowLeft className="size-6" /></button>
    </nav>
  );
}

const minutes = Array.from({ length: 30 }, (_, i) => (i === 29 ? 42 : 1));
const cardLabel = "text-[13px] leading-4 font-medium text-[#5f6368]";

function RealtimeCard() {
  return (
    <section className="rounded-lg border border-[#dadce0] bg-white/95 px-6 pt-[26px] pb-5 font-['Roboto',sans-serif]">
      <h2 className={cardLabel}>NGƯỜI DÙNG TRONG 30 PHÚT QUA</h2>
      <p className="mt-1.5 text-4xl leading-10 text-[#202124]">1</p>
      <h2 className={cardLabel + " mt-2.5"}>SỐ NGƯỜI DÙNG MỖI PHÚT</h2>
      <div className="mt-2.5 ml-2 flex h-[42px] items-end gap-px">
        {minutes.map((h, i) => (
          <span key={i} className="w-[7px] bg-[#1a73e8]" style={{ height: h }} />
        ))}
      </div>
      <h2 className={cardLabel + " mt-[13px]"}>DANH MỤC THIẾT BỊ TRONG 30 PHÚT QUA</h2>
      <svg className="mx-auto mt-[21px] size-[100px]" viewBox="0 0 100 100" role="img" aria-label="Desktop 100%">
        <circle cx="50" cy="50" r="43" fill="none" stroke="#1967d2" strokeWidth="14" />
      </svg>
      <div className="mt-[18px] ml-[85px] flex gap-1.5">
        <span className="mt-[5px] size-1.5 rounded-full bg-[#1967d2]" />
        <div>
          <p className="text-xs leading-4 font-medium text-[#5f6368]">DESKTOP</p>
          <p className={brandFont + " mt-0.5 text-[21px] leading-7 text-[#202124]"}>100,0%</p>
        </div>
      </div>
    </section>
  );
}

const reportCard = "h-80 rounded-lg border border-[#dadce0] bg-white px-6 pt-6";
const reportTitle = brandFont + " flex h-5 items-center text-sm leading-5 whitespace-nowrap text-[#3c4043]";

function Content() {
  return (
    <main className="flex min-w-0 flex-1">
      <div className="relative min-w-0 flex-1 overflow-hidden">
        <WorldMap />
        <div className="relative pt-2.5 pr-9 pl-[39px]">
          <div className="flex h-[41px] items-center justify-between">
            <h1 className={brandFont + " flex items-center gap-2.5 text-[21px] whitespace-nowrap text-[#202124]"}>
              Tổng quan theo thời gian thực<VerifiedDoc />
            </h1>
            <div className="flex h-[41px] items-center rounded-full bg-[#f8f9fb]/70 pr-1.5 pl-3">
              <button className={brandFont + " flex items-center gap-3.5 text-sm whitespace-nowrap text-[#3c4043]"}>
                <SnapshotIcon />Xem ảnh chụp nhanh của người dùng
              </button>
              <button className={iconButton + " ml-3.5 size-6"} aria-label="Toàn màn hình"><MdFullscreen className="size-6 text-[#5f6368]" /></button>
              <button className={iconButton + " ml-3 size-6"} aria-label="Tuỳ chỉnh thẻ"><EditChartIcon /></button>
              <button className={iconButton + " ml-3 size-6"} aria-label="Chia sẻ"><MdOutlineShare className="size-6 text-[#5f6368]" /></button>
            </div>
          </div>
          <div className="mt-[15px] flex gap-2 font-['Roboto',sans-serif] text-xs text-[#202124]">
            <button className="flex h-6 items-center gap-2 rounded-full bg-[#e8f0fe] pr-3 pl-[3px]">
              <span className="flex size-5 items-center justify-center rounded-full bg-[#1a73e8] text-sm font-medium text-white">T</span>
              Tất cả người dùng
            </button>
            <button className="flex h-6 items-center gap-1 rounded-full border border-dashed border-[#80868b] bg-[#f8f9fb]/70 pr-1 pl-3 font-medium">
              Thêm thông tin so sánh<MdAdd className="size-5 text-[#5f6368]" />
            </button>
          </div>
          <div className="mt-[21px] grid grid-cols-3 gap-3.5 pr-[27px]">
            <RealtimeCard />
            <section className={reportCard + " col-start-1"}><h2 className={reportTitle}>Người dùng theo</h2></section>
            <section className={reportCard}>
              <h2 className={reportTitle}>Người dùng<MdArrowDropDown className="size-6" />theo Đối tượng</h2>
            </section>
            <section className={reportCard}><h2 className={reportTitle}>Số lần xem theo Tiêu đề trang và tên</h2></section>
          </div>
        </div>
        <button className={iconButton + " absolute right-1.5 bottom-[46px] size-10 rounded-full bg-white text-[#202124] shadow-md"} aria-label="Gửi phản hồi">
          <MdOutlineFeedback className="size-6" />
        </button>
      </div>
      <div className="w-1.5 bg-[#f1f3f4]"><div className="h-[39%] rounded-sm bg-[#c1c3c6]" /></div>
    </main>
  );
}

/* ---------- desktop task bar ---------- */

const taskButton = "flex w-[49px] items-center justify-center";
const running = " bg-[linear-gradient(#76b9ed,#76b9ed)] bg-[length:40px_2px] bg-bottom bg-no-repeat";

function TaskBar() {
  return (
    <footer className="flex h-10 shrink-0 bg-linear-to-r from-[#21373d] via-[#203340] to-[#1b2444] text-white">
      <button className="flex w-[50px] items-center justify-center pr-0.5" aria-label="Bắt đầu"><WindowsLogo /></button>
      <button className={taskButton + running} aria-label="File Explorer"><ExplorerIcon /></button>
      <button className={taskButton} aria-label="Thư"><MailIcon /></button>
      <button className={taskButton} aria-label="Edge"><EdgeIcon /></button>
      <button className={taskButton + " bg-[linear-gradient(#76b9ed,#76b9ed)] bg-[length:100%_2px] bg-bottom bg-no-repeat bg-[#4c5f66]"} aria-label="Chrome"><ChromeIcon /></button>
      <button className={taskButton + running} aria-label="Visual Studio Code"><VsCodeIcon /></button>
      <button className={taskButton + running} aria-label="Discord"><DiscordIcon /></button>
      <div className="flex-1" />
      <button className="flex items-center gap-2 text-[13px]"><WeatherIcon /><span>82°F</span><span>Rain</span></button>
      <div className="ml-4 flex items-center gap-2">
        <svg className="size-3.5" viewBox="0 0 14 14" fill="none" stroke="#fff" strokeWidth="1.200"><path d="M1 10l6-6 6 6" /></svg>
        <svg className="ml-0.5 size-4" viewBox="0 0 16 16" fill="none" stroke="#fff" strokeWidth="1.200"><rect x="3" y="4.500" width="7" height="7" rx="1" /><path d="M10 7l3-2v6l-3-2M4 2c2-1.500 6-1.500 8 0M4 14c2 1.500 6 1.500 8 0" /></svg>
        <svg className="size-[18px]" viewBox="0 0 18 18" fill="none" stroke="#fff" strokeWidth="1.200"><path d="M7.500 5.500h8v7h-11v-2M15.500 8H17v2h-1.500M2 3v2M5 3v2M1 5h5v2.500a2 2 0 01-5 0zM3.500 9.500v2" /></svg>
        <svg className="size-4" viewBox="0 0 16 16" fill="none" stroke="#fff" strokeWidth="1.200"><path d="M2 14.500A12 12 0 0114 3M5 14.500A9 9 0 0114 6.500M8 14.500a6 6 0 016-5M11 14.500a3 3 0 013-2.500" /><circle cx="13.500" cy="14" r="1" fill="#fff" /></svg>
        <svg className="size-4" viewBox="0 0 16 16" fill="none" stroke="#fff" strokeWidth="1.200"><path d="M1 6h2.500L7 2.500v11L3.500 10H1zM9.500 6a3 3 0 010 4M11.500 4a6 6 0 010 8M13.500 2.500a9 9 0 010 11" /></svg>
      </div>
      <span className="ml-2 w-[30px] self-center text-[11px]">ENG</span>
      <div className="w-16 self-center text-center text-[11px] leading-[18px]">
        <div>9:12 PM</div>
        <div>7/19/2021</div>
      </div>
      <button className={iconButton + " ml-1 w-8"} aria-label="Thông báo">
        <svg className="size-[18px]" viewBox="0 0 18 18" fill="none" stroke="#fff" strokeWidth="1.200"><path d="M1 2h16v12h-5l-3 3-3-3H1z" /></svg>
      </button>
      <div className="ml-3 w-px bg-[#56607a]" />
      <div className="w-1" />
    </footer>
  );
}

export default function App() {
  return (
    <div className="flex h-screen flex-col overflow-hidden bg-white font-['Open_Sans','Noto_Sans',sans-serif]">
      <TabStrip />
      <Toolbar />
      <Bookmarks />
      <AppHeader />
      <div className="flex min-h-0 flex-1 bg-[#f8f9fb]">
        <Rail />
        <SideNav />
        <Content />
      </div>
      <TaskBar />
    </div>
  );
}
